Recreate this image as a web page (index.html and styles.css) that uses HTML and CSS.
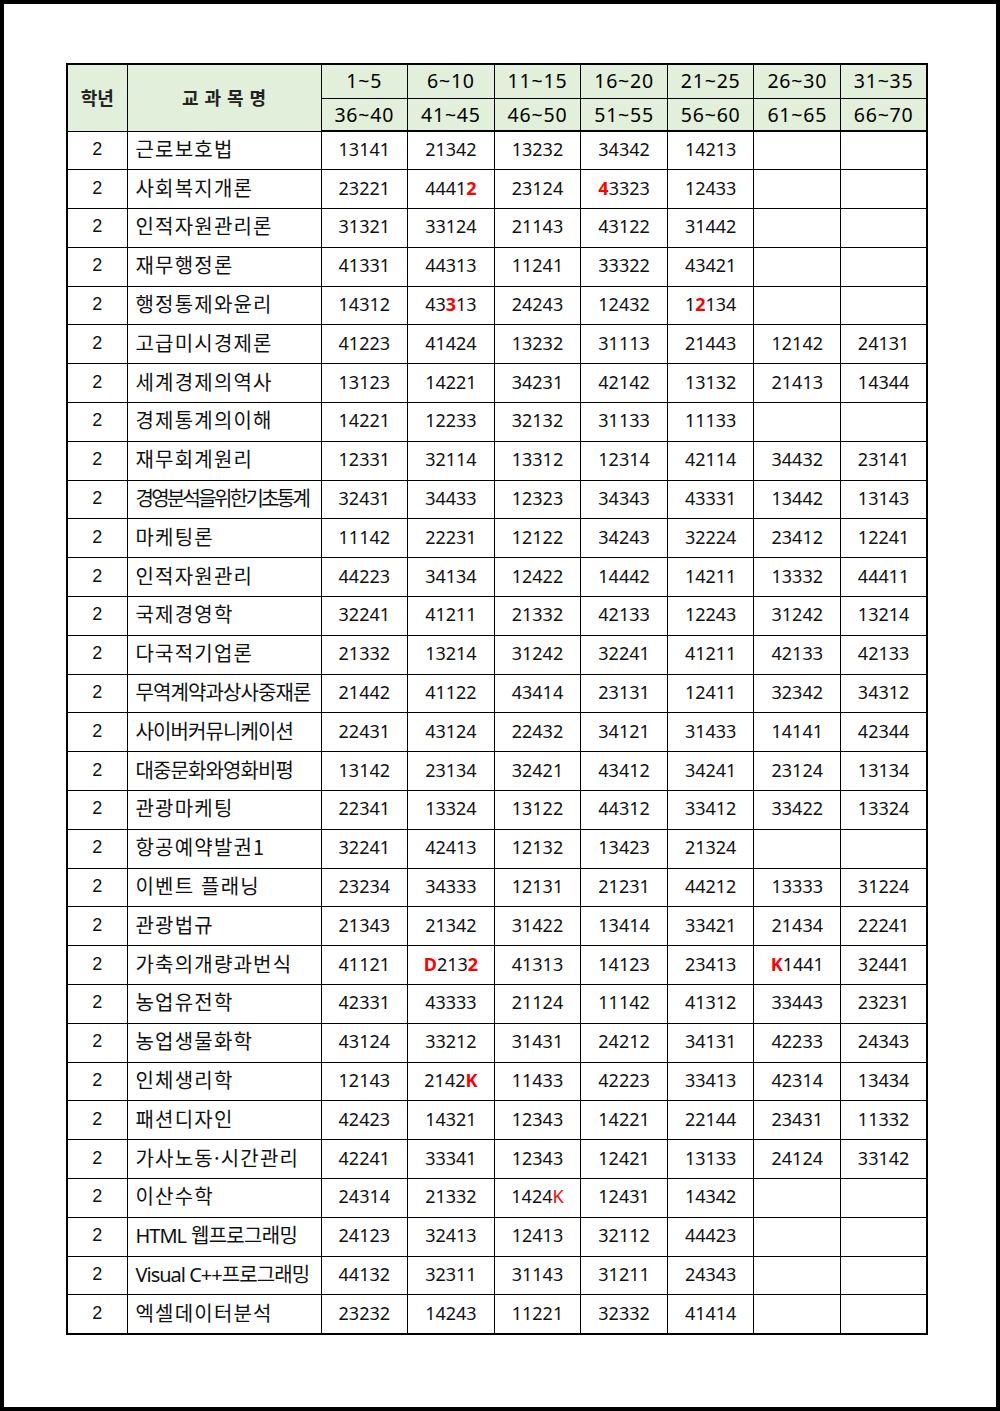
FILE: index.html
```html
<!DOCTYPE html>
<html lang="ko">
<head>
<meta charset="utf-8">
<title>교과목 정답표</title>
<link rel="stylesheet" href="styles.css">
</head>
<body>
<div class="page">
<table class="grid">
<colgroup>
<col class="c-grade"><col class="c-name">
<col class="c-num"><col class="c-num"><col class="c-num"><col class="c-num"><col class="c-num"><col class="c-num"><col class="c-num">
</colgroup>
<thead>
<tr class="h1">
<th rowspan="2" class="hk">학년</th>
<th rowspan="2" class="hk hname">교과목명</th>
<th>1~5</th><th>6~10</th><th>11~15</th><th>16~20</th><th>21~25</th><th>26~30</th><th>31~35</th>
</tr>
<tr class="h2">
<th>36~40</th><th>41~45</th><th>46~50</th><th>51~55</th><th>56~60</th><th>61~65</th><th>66~70</th>
</tr>
</thead>
<tbody>
<tr><td class="g">2</td><td class="n">근로보호법</td><td>13141</td><td>21342</td><td>13232</td><td>34342</td><td>14213</td><td></td><td></td></tr>
<tr><td class="g">2</td><td class="n">사회복지개론</td><td>23221</td><td>4441<b class="r">2</b></td><td>23124</td><td><b class="r">4</b>3323</td><td>12433</td><td></td><td></td></tr>
<tr><td class="g">2</td><td class="n">인적자원관리론</td><td>31321</td><td>33124</td><td>21143</td><td>43122</td><td>31442</td><td></td><td></td></tr>
<tr><td class="g">2</td><td class="n">재무행정론</td><td>41331</td><td>44313</td><td>11241</td><td>33322</td><td>43421</td><td></td><td></td></tr>
<tr><td class="g">2</td><td class="n">행정통제와윤리</td><td>14312</td><td>43<b class="r">3</b>13</td><td>24243</td><td>12432</td><td>1<b class="r">2</b>134</td><td></td><td></td></tr>
<tr><td class="g">2</td><td class="n">고급미시경제론</td><td>41223</td><td>41424</td><td>13232</td><td>31113</td><td>21443</td><td>12142</td><td>24131</td></tr>
<tr><td class="g">2</td><td class="n">세계경제의역사</td><td>13123</td><td>14221</td><td>34231</td><td>42142</td><td>13132</td><td>21413</td><td>14344</td></tr>
<tr><td class="g">2</td><td class="n">경제통계의이해</td><td>14221</td><td>12233</td><td>32132</td><td>31133</td><td>11133</td><td></td><td></td></tr>
<tr><td class="g">2</td><td class="n">재무회계원리</td><td>12331</td><td>32114</td><td>13312</td><td>12314</td><td>42114</td><td>34432</td><td>23141</td></tr>
<tr><td class="g">2</td><td class="n tight">경영분석을위한기초통계</td><td>32431</td><td>34433</td><td>12323</td><td>34343</td><td>43331</td><td>13442</td><td>13143</td></tr>
<tr><td class="g">2</td><td class="n">마케팅론</td><td>11142</td><td>22231</td><td>12122</td><td>34243</td><td>32224</td><td>23412</td><td>12241</td></tr>
<tr><td class="g">2</td><td class="n">인적자원관리</td><td>44223</td><td>34134</td><td>12422</td><td>14442</td><td>14211</td><td>13332</td><td>44411</td></tr>
<tr><td class="g">2</td><td class="n">국제경영학</td><td>32241</td><td>41211</td><td>21332</td><td>42133</td><td>12243</td><td>31242</td><td>13214</td></tr>
<tr><td class="g">2</td><td class="n">다국적기업론</td><td>21332</td><td>13214</td><td>31242</td><td>32241</td><td>41211</td><td>42133</td><td>42133</td></tr>
<tr><td class="g">2</td><td class="n mid">무역계약과상사중재론</td><td>21442</td><td>41122</td><td>43414</td><td>23131</td><td>12411</td><td>32342</td><td>34312</td></tr>
<tr><td class="g">2</td><td class="n mid">사이버커뮤니케이션</td><td>22431</td><td>43124</td><td>22432</td><td>34121</td><td>31433</td><td>14141</td><td>42344</td></tr>
<tr><td class="g">2</td><td class="n mid">대중문화와영화비평</td><td>13142</td><td>23134</td><td>32421</td><td>43412</td><td>34241</td><td>23124</td><td>13134</td></tr>
<tr><td class="g">2</td><td class="n">관광마케팅</td><td>22341</td><td>13324</td><td>13122</td><td>44312</td><td>33412</td><td>33422</td><td>13324</td></tr>
<tr><td class="g">2</td><td class="n">항공예약발권1</td><td>32241</td><td>42413</td><td>12132</td><td>13423</td><td>21324</td><td></td><td></td></tr>
<tr><td class="g">2</td><td class="n">이벤트 플래닝</td><td>23234</td><td>34333</td><td>12131</td><td>21231</td><td>44212</td><td>13333</td><td>31224</td></tr>
<tr><td class="g">2</td><td class="n">관광법규</td><td>21343</td><td>21342</td><td>31422</td><td>13414</td><td>33421</td><td>21434</td><td>22241</td></tr>
<tr><td class="g">2</td><td class="n">가축의개량과번식</td><td>41121</td><td><b class="r">D</b>213<b class="r">2</b></td><td>41313</td><td>14123</td><td>23413</td><td><b class="r">K</b>1441</td><td>32441</td></tr>
<tr><td class="g">2</td><td class="n">농업유전학</td><td>42331</td><td>43333</td><td>21124</td><td>11142</td><td>41312</td><td>33443</td><td>23231</td></tr>
<tr><td class="g">2</td><td class="n">농업생물화학</td><td>43124</td><td>33212</td><td>31431</td><td>24212</td><td>34131</td><td>42233</td><td>24343</td></tr>
<tr><td class="g">2</td><td class="n">인체생리학</td><td>12143</td><td>2142<b class="r">K</b></td><td>11433</td><td>42223</td><td>33413</td><td>42314</td><td>13434</td></tr>
<tr><td class="g">2</td><td class="n">패션디자인</td><td>42423</td><td>14321</td><td>12343</td><td>14221</td><td>22144</td><td>23431</td><td>11332</td></tr>
<tr><td class="g">2</td><td class="n">가사노동·시간관리</td><td>42241</td><td>33341</td><td>12343</td><td>12421</td><td>13133</td><td>24124</td><td>33142</td></tr>
<tr><td class="g">2</td><td class="n">이산수학</td><td>24314</td><td>21332</td><td>1424<span class="rt">K</span></td><td>12431</td><td>14342</td><td></td><td></td></tr>
<tr><td class="g">2</td><td class="n semi"><span class="lat">HTML</span> 웹프로그래밍</td><td>24123</td><td>32413</td><td>12413</td><td>32112</td><td>44423</td><td></td><td></td></tr>
<tr><td class="g">2</td><td class="n mid"><span class="lat">Visual C++</span>프로그래밍</td><td>44132</td><td>32311</td><td>31143</td><td>31211</td><td>24343</td><td></td><td></td></tr>
<tr><td class="g">2</td><td class="n">엑셀데이터분석</td><td>23232</td><td>14243</td><td>11221</td><td>32332</td><td>41414</td><td></td><td></td></tr>
</tbody>
</table>
</div>
</body>
</html>
```
FILE: styles.css
```css
html, body {
  margin: 0;
  padding: 0;
  background: #ffffff;
}
.page {
  box-sizing: border-box;
  width: 1000px;
  height: 1411px;
  border: 4px solid #000;
  padding: 59px 0 0 62px;
  background: #fff;
}
.grid {
  border-collapse: collapse;
  table-layout: fixed;
  width: 862px;
  border: 2px solid #000;
  font-family: "Noto Sans", "Noto Sans CJK KR", sans-serif;
  font-size: 18px;
  color: #111;
}
.c-grade { width: 60px; }
.c-name { width: 194px; }
.c-num { width: 86.6px; }
.grid th, .grid td {
  border: 1px solid #000;
  padding: 0;
  text-align: center;
  white-space: nowrap;
  overflow: hidden;
  line-height: 1;
}
.grid thead th {
  background: #e2efda;
  font-weight: 400;
  font-size: 19.5px;
  letter-spacing: 0.8px;
  color: #000;
}
.grid thead tr.h1 { height: 34px; }
.grid thead tr.h2 { height: 33px; }
.grid thead tr.h1 th { padding-bottom: 2px; }
.grid thead tr.h2 th { border-bottom: 2px solid #000; }
.grid thead th.hk {
  font-family: "Noto Sans CJK KR", sans-serif;
  font-weight: 700;
  font-size: 18px;
  letter-spacing: 0;
  color: #222;
  padding-bottom: 0;
}
.grid thead th.hname {
  letter-spacing: 6px;
  padding-left: 6px;
}
.grid tbody tr { height: 38.8px; }
.grid tbody td { padding-bottom: 3px; }
.grid td.g {
  font-family: "Liberation Sans", Arial, sans-serif;
  font-size: 18px;
}
.grid td.n {
  text-align: left;
  padding-left: 8px;
  font-family: "Noto Sans CJK KR", sans-serif;
  font-size: 20px;
  letter-spacing: 1.2px;
}
.grid td.n.semi { letter-spacing: -0.7px; }
.grid td.n.mid { letter-spacing: -0.9px; }
.grid td.n.tight { letter-spacing: -2.7px; }
.lat {
  font-family: "Noto Sans", sans-serif;
  letter-spacing: -1px;
}
.r {
  color: #ff0000;
  font-weight: 700;
}
.rt {
  color: #ff0000;
}
```
